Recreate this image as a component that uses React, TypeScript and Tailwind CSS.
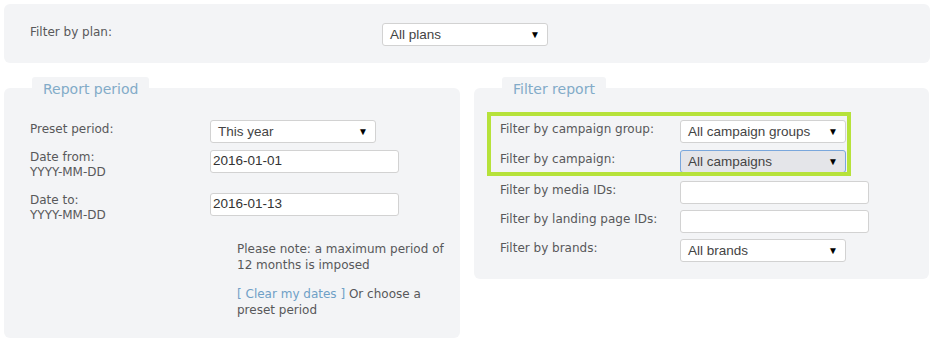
import React from 'react';

const labelFont = "font-['DejaVu_Sans',sans-serif] text-[12px] text-[#58585a]";
const fieldFont = "font-['Liberation_Sans',Arial,sans-serif] text-[13.5px] text-[#333]";

// Fake select box with the small black triangle on the right
const Select: React.FC<{ value: string; active?: boolean; width?: string }> = ({ value, active, width = 'w-[166px]' }) => (
  <div
    className={`${width} h-[23px] flex items-center justify-between pl-[7px] pr-[7px] rounded-[3px] border ${
      active ? 'bg-[#e4e5e9] border-[#7aa7dc]' : 'bg-white border-[#d2d2d2]'
    } ${fieldFont}`}
  >
    <span className="text-[#444] pt-[1px]">{value}</span>
    <span className="text-[10px] text-black">▼</span>
  </div>
);

const Input: React.FC<{ value?: string }> = ({ value = '' }) => (
  <div className={`w-[189px] h-[23px] flex items-center px-[2px] bg-white rounded-[3px] border border-[#d2d2d2] ${fieldFont} text-[#111]`}>
    {value}
  </div>
);

const Panel: React.FC<{ title: string; className?: string; children: React.ReactNode }> = ({ title, className = '', children }) => (
  <div className={`flex flex-col ${className}`}>
    <div className="relative z-10 ml-[28px] w-fit h-[11px] px-[11px] bg-[#f3f4f6] rounded-t-[3px]">
      <span className="block pt-[3px] leading-[18px] font-['DejaVu_Sans',sans-serif] text-[14px] text-[#82abc8]">{title}</span>
    </div>
    <div className="relative bg-[#f3f4f6] rounded-[6px] pl-[26px] pt-[32px]">{children}</div>
  </div>
);

const App: React.FC = () => {
  return (
    <div className="w-[935px] h-[348px] bg-white pt-[4px] pl-[4px]">
      {/* Plan filter */}
      <div className="w-[926px] h-[59px] bg-[#f3f4f6] rounded-[6px] flex items-start pt-[19px] pl-[26px]">
        <div className={`w-[352px] ${labelFont}`}>Filter by plan:</div>
        <Select value="All plans" />
      </div>

      <div className="flex items-start gap-[14px] mt-[14px]">
        {/* Report period */}
        <Panel title="Report period" className="w-[456px]">
          <div className="h-[218px]">
            <div className="flex">
              <div className={`w-[180px] ${labelFont}`}>Preset period:</div>
              <Select value="This year" />
            </div>
            <div className="flex mt-[7px]">
              <div className={`w-[180px] leading-[15px] ${labelFont}`}>
                Date from:
                <br />
                YYYY-MM-DD
              </div>
              <Input value="2016-01-01" />
            </div>
            <div className="flex mt-[13px]">
              <div className={`w-[180px] leading-[15px] ${labelFont}`}>
                Date to:
                <br />
                YYYY-MM-DD
              </div>
              <Input value="2016-01-13" />
            </div>
            <div className={`ml-[207px] mt-[18px] w-[215px] leading-[16px] ${labelFont}`}>
              <p>Please note: a maximum period of 12 months is imposed</p>
              <p className="mt-[13px]">
                <span className="text-[#6fa0c6]">[ Clear my dates ]</span> Or choose a preset period
              </p>
            </div>
          </div>
        </Panel>

        {/* Filter report */}
        <Panel title="Filter report" className="w-[455px]">
          <div className="h-[159px]">
            {/* highlight box */}
            <div className="absolute left-[13px] top-[24px] w-[364px] h-[64px] border-[4px] border-[#b6e23a]" />
            <div className="flex">
              <div className={`w-[180px] ${labelFont}`}>Filter by campaign group:</div>
              <Select value="All campaign groups" />
            </div>
            <div className="flex mt-[7px]">
              <div className={`w-[180px] ${labelFont}`}>Filter by campaign:</div>
              <Select value="All campaigns" active />
            </div>
            <div className="flex mt-[8px]">
              <div className={`w-[180px] ${labelFont}`}>Filter by media IDs:</div>
              <Input />
            </div>
            <div className="flex mt-[6px]">
              <div className={`w-[180px] ${labelFont}`}>Filter by landing page IDs:</div>
              <Input />
            </div>
            <div className="flex mt-[6px]">
              <div className={`w-[180px] ${labelFont}`}>Filter by brands:</div>
              <Select value="All brands" />
            </div>
          </div>
        </Panel>
      </div>
    </div>
  );
};

export default App;
